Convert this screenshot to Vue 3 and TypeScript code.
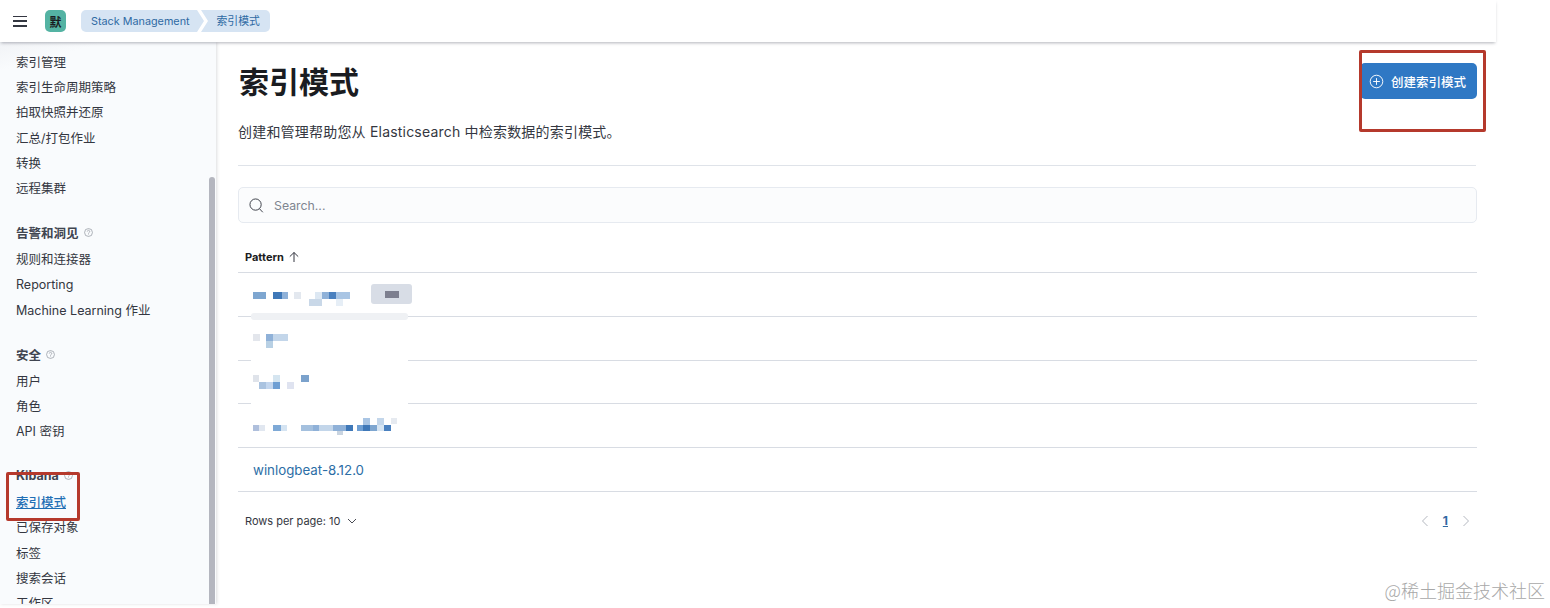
<template>
  <div class="page">
    <header class="topbar">
      <button class="burger" aria-label="menu"><span></span><span></span><span></span></button>
      <div class="avatar">默</div>
      <nav class="crumbs">
        <a class="crumb first">Stack Management</a>
        <svg class="sep" width="12" height="22" viewBox="0 0 12 22"><path d="M0 0 L7 11 L0 22 L4 22 L11 11 L4 0 Z" fill="#fff" /></svg>
        <a class="crumb last">索引模式</a>
      </nav>
    </header>

    <div class="body">
      <aside class="sidebar">
        <div v-for="group in groups" :key="group.title" class="group">
          <h4 v-if="group.title" class="group-title">
            {{ group.title }}
            <svg class="help" width="9" height="9" viewBox="0 0 16 16"><circle cx="8" cy="8" r="7" fill="none" stroke="#8a8f99" stroke-width="1.2" /><path d="M5.8 6.2a2.2 2.2 0 1 1 3.4 1.9C8.4 8.6 8 9 8 10M8 11.6v1" fill="none" stroke="#8a8f99" stroke-width="1.2" /></svg>
          </h4>
          <a v-for="item in group.items" :key="item" class="side-item" :class="{ active: item === '索引模式' }">{{ item }}</a>
        </div>
        <div class="thumb"></div>
        <div class="mark mark-left"></div>
      </aside>

      <main class="main">
        <div class="head">
          <div>
            <h1>索引模式</h1>
            <p class="desc">创建和管理帮助您从 Elasticsearch 中检索数据的索引模式。</p>
          </div>
          <button class="create">
            <svg width="15" height="15" viewBox="0 0 16 16"><circle cx="8" cy="8" r="6.7" fill="none" stroke="#fff" stroke-width="1" /><path d="M8 4.4v7.2M4.4 8h7.2" stroke="#fff" stroke-width="1" /></svg>
            创建索引模式
          </button>
          <div class="mark mark-right"></div>
        </div>
        <div class="rule"></div>

        <label class="search">
          <svg width="15" height="15" viewBox="0 0 16 16"><circle cx="7" cy="7" r="6" fill="none" stroke="#343741" stroke-width="1" /><path d="M11.3 11.6l3.4 3.6" stroke="#343741" stroke-width="1" /></svg>
          <span>Search...</span>
        </label>

        <div class="th">
          Pattern
          <svg width="12" height="12" viewBox="0 0 12 12"><path d="M6 11V1.5M1.8 5.6L6 1.5l4.2 4.1" fill="none" stroke="#343741" stroke-width="1" /></svg>
        </div>

        <div class="table">
          <div v-for="(row, i) in rows" :key="i" class="row">
            <a v-if="row.text" class="pattern">{{ row.text }}</a>
            <svg v-else class="mosaic" width="170" height="24" viewBox="0 0 170 24">
              <rect v-for="(c, j) in row.cells" :key="j" :x="c[0]" :y="c[1]" :width="c[2]" :height="c[3]" :fill="c[4]" />
            </svg>
            <span v-if="i === 0" class="badge"><i></i></span>
          </div>
          <div class="patch"><div class="patch-top"></div></div>
        </div>

        <div class="foot">
          <span class="per-page">
            Rows per page: 10
            <svg width="10" height="10" viewBox="0 0 10 10"><path d="M1 3l4 4 4-4" fill="none" stroke="#343741" stroke-width="0.9" /></svg>
          </span>
          <div class="pager">
            <svg width="8" height="12" viewBox="0 0 8 12"><path d="M6.5 1L1.5 6l5 5" fill="none" stroke="#b4b8c0" stroke-width="1" /></svg>
            <a class="current">1</a>
            <svg width="8" height="12" viewBox="0 0 8 12"><path d="M1.5 1l5 5-5 5" fill="none" stroke="#b4b8c0" stroke-width="1" /></svg>
          </div>
        </div>
      </main>
    </div>
    <div class="watermark">@稀土掘金技术社区</div>
  </div>
</template>

<script setup lang="ts">
type Cell = [number, number, number, number, string];

interface Group {
  title: string;
  items: string[];
}

interface Row {
  text?: string;
  cells?: Cell[];
}

const groups: Group[] = [
  { title: "", items: ["索引管理", "索引生命周期策略", "拍取快照并还原", "汇总/打包作业", "转换", "远程集群"] },
  { title: "告警和洞见", items: ["规则和连接器", "Reporting", "Machine Learning 作业"] },
  { title: "安全", items: ["用户", "角色", "API 密钥"] },
  { title: "Kibana", items: ["索引模式", "已保存对象", "标签", "搜索会话", "工作区"] }
];

const rows: Row[] = [
  {
    cells: [
      [0, 10, 13, 7, "#7ea6d0"], [20, 10, 9, 7, "#3f78b8"], [29, 10, 6, 7, "#8fb1d8"], [41, 10, 7, 7, "#e3e8ef"],
      [62, 10, 7, 7, "#dde8f3"], [69, 10, 7, 7, "#8fb1d8"], [76, 10, 7, 7, "#4a80bf"], [83, 10, 14, 7, "#a9c5e4"],
      [56, 17, 13, 7, "#c9d8e8"], [83, 17, 7, 7, "#e6eef6"]
    ]
  },
  {
    cells: [
      [0, 8, 7, 7, "#e3e6ec"], [13, 8, 7, 7, "#8fb1d8"], [20, 8, 15, 7, "#c3d6ea"], [13, 15, 7, 7, "#b8d0e4"]
    ]
  },
  {
    cells: [
      [0, 5, 6, 7, "#dfe3ea"], [20, 5, 7, 7, "#d5e5f0"], [48, 5, 8, 7, "#7ba2cc"],
      [6, 12, 7, 7, "#aac3e0"], [13, 12, 7, 7, "#c3d6ee"], [20, 12, 7, 7, "#6f9fd3"], [34, 12, 7, 7, "#dfe3f0"]
    ]
  },
  {
    cells: [
      [0, 11, 6, 6, "#afbfdc"], [6, 11, 6, 6, "#e1e7f0"], [20, 11, 8, 6, "#7ea9d6"], [28, 11, 6, 6, "#d5e4f2"],
      [48, 11, 12, 6, "#a4c0de"], [60, 11, 6, 6, "#8fb1d8"], [66, 11, 14, 6, "#c3d6ea"], [80, 11, 13, 6, "#8fb1d8"],
      [93, 11, 7, 6, "#3f78b8"], [104, 11, 6, 6, "#6f9fd3"], [110, 11, 7, 6, "#3f78b8"], [117, 11, 7, 6, "#7ea6d0"],
      [124, 11, 7, 6, "#d5e4f2"], [131, 11, 7, 6, "#4a80bf"], [110, 4, 7, 7, "#a9c5e4"], [124, 4, 7, 7, "#c3d6ea"],
      [138, 4, 6, 6, "#e6eaf0"], [84, 17, 6, 4, "#c9d4e0"]
    ]
  },
  { text: "winlogbeat-8.12.0" }
];
</script>

<style scoped>
.page {
  position: relative;
  width: 1550px;
  height: 608px;
  overflow: hidden;
  background: #fff;
  color: #343741;
  font-family: Inter, "Noto Sans CJK SC", sans-serif;
}

.topbar {
  position: relative;
  z-index: 3;
  display: flex;
  align-items: center;
  width: 1496px;
  height: 42px;
  box-sizing: border-box;
  padding-left: 13px;
  background: #fff;
  box-shadow: 0 2px 3px -1px rgba(60, 66, 80, 0.4);
}

.burger {
  display: flex;
  flex-direction: column;
  justify-content: space-between;
  width: 14px;
  height: 11px;
  padding: 0;
  border: 0;
  background: none;
}

.burger span {
  display: block;
  height: 1.5px;
  background: #343741;
}

.avatar {
  display: flex;
  align-items: center;
  justify-content: center;
  width: 21px;
  height: 22px;
  margin-left: 18px;
  border-radius: 5px;
  background: #54b3a3;
  color: #1a1c21;
  font-size: 12px;
  font-weight: 700;
}

.crumbs {
  display: flex;
  align-items: flex-start;
  height: 22px;
  margin-left: 15px;
  border-radius: 5px;
  overflow: hidden;
  background: #d6e4f3;
  color: #2f6aa3;
  font-size: 10.8px;
}

.crumb {
  padding-top: 1px;
  line-height: 22px;
}

.first {
  padding-left: 10px;
  padding-right: 7px;
}

.sep {
  margin-right: 8px;
}

.last {
  padding-right: 10px;
}

.body {
  display: flex;
  width: 1496px;
  height: 562px;
}

.sidebar {
  position: relative;
  flex: none;
  width: 216px;
  box-sizing: border-box;
  padding: 8px 0 0 16px;
  overflow: hidden;
  background: linear-gradient(165deg, #f1f3f6 0, #f9fbfd 28px);
  box-shadow: 1px 0 3px rgba(60, 66, 80, 0.18);
  font-size: 12.5px;
}

.group {
  margin-bottom: 20px;
}

.group-title {
  display: flex;
  align-items: center;
  gap: 5px;
  height: 25px;
  margin: -1px 0 2px;
  font-size: 12.5px;
  font-weight: 700;
  color: #404550;
}

.side-item {
  display: block;
  height: 25.2px;
  line-height: 25px;
  white-space: nowrap;
}

.side-item.active {
  color: #1f6fb5;
  font-weight: 500;
  text-decoration: underline;
}

.thumb {
  position: absolute;
  top: 135px;
  left: 209px;
  width: 6px;
  height: 427px;
  border-radius: 3px 3px 0 0;
  background: #b4b6bf;
}

.mark {
  position: absolute;
  z-index: 4;
  box-sizing: border-box;
  border: 3.5px solid #b5392c;
  border-radius: 2px;
}

.mark-left {
  top: 430px;
  left: 6px;
  width: 74px;
  height: 49px;
}

.main {
  flex: 1;
  min-width: 0;
  padding: 0 19px 0 22px;
}

.head {
  position: relative;
  display: flex;
  justify-content: space-between;
  align-items: flex-start;
  height: 123px;
}

h1 {
  margin: 20px 0 0 1px;
  font-size: 30px;
  line-height: 40px;
  font-weight: 700;
  color: #1a1c21;
}

.desc {
  margin: 20px 0 0;
  font-size: 14px;
  line-height: 20px;
  letter-spacing: 0.2px;
  color: #343741;
}

.create {
  display: flex;
  align-items: center;
  gap: 7px;
  width: 117px;
  height: 36px;
  margin-top: 21px;
  padding: 0 0 0 9px;
  border: 0;
  border-radius: 5px;
  background: #2f78c4;
  color: #fff;
  font-family: inherit;
  font-size: 12.5px;
  font-weight: 500;
  white-space: nowrap;
}

.mark-right {
  top: 8px;
  right: -9px;
  width: 127px;
  height: 82px;
}

.rule {
  height: 1px;
  margin-right: 1px;
  background: #dfe3e9;
}

.search {
  display: flex;
  align-items: center;
  gap: 10px;
  height: 36px;
  margin-top: 21px;
  box-sizing: border-box;
  padding-left: 10px;
  border: 1px solid #e6eaf0;
  border-radius: 5px;
  background: #fbfcfd;
  font-size: 12.3px;
  color: #7f8590;
}

.th {
  display: flex;
  align-items: center;
  gap: 4px;
  height: 50px;
  box-sizing: border-box;
  padding: 18px 0 0 7px;
  border-bottom: 1px solid #d8dce3;
  font-size: 11px;
  font-weight: 700;
  color: #1a1c21;
}

.table {
  position: relative;
}

.row {
  display: flex;
  align-items: center;
  height: 43.8px;
  box-sizing: border-box;
  padding-left: 15px;
  border-bottom: 1px solid #d8dce3;
}

.mosaic {
  position: relative;
  z-index: 2;
  flex: none;
}

.pattern {
  color: #2c6ea6;
  font-size: 13.3px;
}

.badge {
  position: relative;
  z-index: 2;
  display: flex;
  align-items: center;
  justify-content: center;
  width: 41px;
  height: 20px;
  margin-left: -52px;
  border-radius: 3px;
  background: #d8dde6;
}

.badge i {
  width: 14px;
  height: 7px;
  background: #7d7f8f;
}

.patch {
  position: absolute;
  z-index: 1;
  top: 40px;
  left: 13px;
  width: 157px;
  height: 128px;
  background: #fff;
}

.patch-top {
  height: 7px;
  border-radius: 3px;
  background: #eff1f4;
}

.foot {
  display: flex;
  justify-content: space-between;
  align-items: center;
  height: 58px;
  padding: 0 7px;
  font-size: 11px;
}

.per-page {
  display: flex;
  align-items: center;
  gap: 7px;
}

.pager {
  display: flex;
  align-items: center;
  gap: 14px;
}

.current {
  color: #2f6aa3;
  font-size: 12px;
  font-weight: 700;
  text-decoration: underline;
}

.watermark {
  position: absolute;
  right: 5px;
  bottom: 5px;
  font-size: 18px;
  line-height: 26px;
  color: #a8a8a8;
  font-family: "Noto Sans CJK SC", sans-serif;
  font-weight: 300;
}
</style>
